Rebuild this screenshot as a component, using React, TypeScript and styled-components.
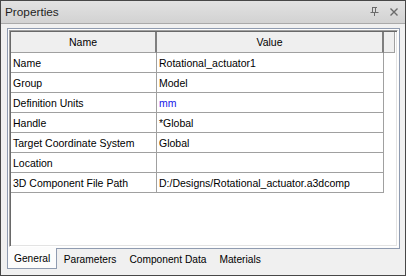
import styled, { createGlobalStyle } from 'styled-components';

const GlobalStyle = createGlobalStyle`
  html, body {
    margin: 0;
    padding: 0;
    background: #f0f0f0;
  }
  * {
    box-sizing: border-box;
  }
`;

interface rowType {
  name: string;
  value: string;
  unit?: boolean;
}

const rows: rowType[] = [
  { name: 'Name', value: 'Rotational_actuator1' },
  { name: 'Group', value: 'Model' },
  { name: 'Definition Units', value: 'mm', unit: true },
  { name: 'Handle', value: '*Global' },
  { name: 'Target Coordinate System', value: 'Global' },
  { name: 'Location', value: '' },
  { name: '3D Component File Path', value: 'D:/Designs/Rotational_actuator.a3dcomp' },
];

const tabs = ['General', 'Parameters', 'Component Data', 'Materials'];

export default function App() {
  return (
    <>
      <GlobalStyle />
      <Window>
        <TitleBar>
          <Title>Properties</Title>
          <TitleButtons>
            <svg width="9" height="9" viewBox="0 0 9 9">
              <path d="M2 0.5h5M2.5 0.5v5M5.5 0.5v5M0.5 5.5h8M4.5 5.5v3.5" stroke="#6b6b6b" strokeWidth="1" fill="none" />
            </svg>
            <svg width="8" height="8" viewBox="0 0 8 8">
              <path d="M0.5 0.5l7 7M7.5 0.5l-7 7" stroke="#6b6b6b" strokeWidth="1.4" fill="none" />
            </svg>
          </TitleButtons>
        </TitleBar>
        <Body>
          <TabPage>
            <Grid>
              <HeaderRow>
                <HeaderCell $width={146}>Name</HeaderCell>
                <HeaderCell $width={227}>Value</HeaderCell>
                <HeaderFiller />
              </HeaderRow>
              {rows.map((r) => (
                <Row key={r.name}>
                  <NameCell>{r.name}</NameCell>
                  <ValueCell $unit={r.unit}>{r.value}</ValueCell>
                </Row>
              ))}
            </Grid>
          </TabPage>
          <TabStrip>
            {tabs.map((t, i) => (
              <Tab key={t} $active={i === 0}>
                {t}
              </Tab>
            ))}
          </TabStrip>
        </Body>
      </Window>
    </>
  );
}

const Window = styled.div`
  width: 406px;
  height: 276px;
  border: 1px solid #474747;
  background: #f0f0f0;
  display: flex;
  flex-direction: column;
  font-family: 'Liberation Sans', Arial, sans-serif;
`;

const TitleBar = styled.div`
  height: 23px;
  flex: none;
  display: flex;
  align-items: center;
  justify-content: space-between;
  padding: 0 7px 0 4px;
  background: linear-gradient(#e2e2e2, #d2d2d2);
  border-bottom: 1px solid #a9a9a9;
`;

const Title = styled.div`
  font-size: 11.8px;
  color: #1e1e1e;
  margin-top: -1px;
`;

const TitleButtons = styled.div`
  display: flex;
  align-items: center;
  gap: 11px;
  margin-top: -1px;
`;

const Body = styled.div`
  flex: 1;
  padding: 4px 5px 0 6px;
  display: flex;
  flex-direction: column;
`;

const TabPage = styled.div`
  height: 221px;
  border: 1px solid #8f9bb0;
  padding: 1px;
  background: #fcfcfc;
`;

const Grid = styled.div`
  height: 100%;
  background: #fff;
  border-top: 1px solid #a0a0a0;
  border-left: 1px solid #a0a0a0;
  border-right: 1px solid #fff;
  border-bottom: 1px solid #fff;
  box-shadow: inset 1px 1px 0 #696969, inset -1px -1px 0 #e3e3e3;
  padding: 1px 2px 1px 1px;
`;

const HeaderRow = styled.div`
  display: flex;
  height: 21px;
`;

const HeaderCell = styled.div<{ $width: number }>`
  width: ${({ $width }) => $width}px;
  background: #efefef;
  border-right: 2px solid #7f7f7f;
  border-bottom: 1px solid #a0a0a0;
  display: flex;
  align-items: center;
  justify-content: center;
  font-size: 10.5px;
  color: #000;
`;

const HeaderFiller = styled.div`
  flex: 1;
  background: #efefef;
  border-right: 1px solid #a0a0a0;
  border-bottom: 1px solid #a0a0a0;
`;

const Row = styled.div`
  display: flex;
  height: 20px;
  width: 373px;
  border-bottom: 1px solid #a0a0a0;
  border-right: 1px solid #a0a0a0;
  font-size: 10.5px;
`;

const NameCell = styled.div`
  width: 146px;
  padding-left: 2px;
  border-right: 1px solid #a0a0a0;
  display: flex;
  align-items: center;
  color: #000;
`;

const ValueCell = styled.div<{ $unit?: boolean }>`
  flex: 1;
  padding-left: 2px;
  display: flex;
  align-items: center;
  color: ${({ $unit }) => ($unit ? '#1515e8' : '#000')};
`;

const TabStrip = styled.div`
  display: flex;
  height: 20px;
`;

const Tab = styled.div<{ $active: boolean }>`
  display: flex;
  align-items: center;
  margin-top: -1px;
  padding: 1px ${({ $active }) => ($active ? '6px' : '6.5px')} 0;
  font-size: 10.2px;
  color: #000;
  background: ${({ $active }) => ($active ? '#fcfcfc' : 'transparent')};
  border: ${({ $active }) => ($active ? '1px solid #8f9bb0' : 'none')};
  border-top: none;
`;
